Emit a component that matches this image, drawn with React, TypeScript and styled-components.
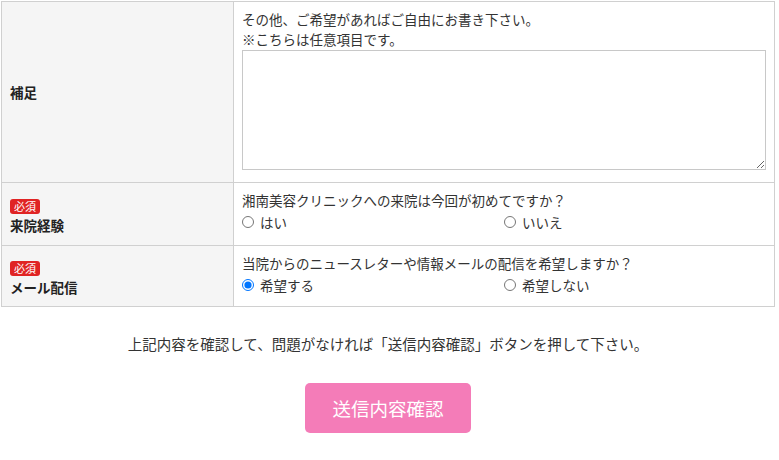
import React, { useState } from "react";
import styled, { createGlobalStyle } from "styled-components";

const GlobalStyle = createGlobalStyle`
  body {
    margin: 0;
    background: #fff;
    color: #333;
    font-family: "Noto Sans CJK JP", "Noto Sans", sans-serif;
  }
`;

const Page = styled.div`
  width: 779px;
  padding: 1px 4px 0 1px;
  box-sizing: border-box;
`;

const FormTable = styled.table`
  width: 774px;
  border-collapse: collapse;
  table-layout: fixed;
`;

const HeadCell = styled.th`
  width: 232px;
  box-sizing: border-box;
  background: #f5f5f5;
  border: 1px solid #d0d0d0;
  padding: 0 8px;
  text-align: left;
  vertical-align: middle;
  font-size: 13.5px;
  font-weight: bold;
  color: #222;
`;

const BodyCell = styled.td<{ $pad?: string }>`
  border: 1px solid #d0d0d0;
  padding: ${(p) => p.$pad || "7px 8px 11px"};
  vertical-align: top;
  font-size: 13.5px;
  color: #333;
`;

const Badge = styled.span`
  display: inline-block;
  background: #e02424;
  color: #fff;
  font-size: 11px;
  font-weight: normal;
  line-height: 15px;
  padding: 0 4px;
  border-radius: 3px;
  margin: 0 0 2px;
`;

const HeadLabel = styled.div`
  line-height: 18px;
`;

const Note = styled.p`
  margin: 0;
  line-height: 20px;
`;

const Memo = styled.textarea`
  display: block;
  box-sizing: border-box;
  width: 100%;
  height: 120px;
  margin: 1px 0 5px;
  border: 1px solid #c8c8c8;
  border-radius: 0;
  resize: vertical;
  font-family: inherit;
  font-size: 13px;
`;

const RadioRow = styled.div`
  display: grid;
  grid-template-columns: 1fr 1fr;
  height: 24px;
  align-items: center;
`;

const RadioLabel = styled.label`
  display: flex;
  align-items: center;
  gap: 6px;
  cursor: pointer;
`;

const Radio = styled.input`
  width: 12px;
  height: 12px;
  margin: 0;
`;

const Guide = styled.p`
  margin: 27px 0 0;
  text-align: center;
  font-size: 14.5px;
  line-height: 20px;
  color: #333;
`;

const Actions = styled.div`
  display: flex;
  justify-content: center;
  padding: 29px 0 26px;
`;

const SubmitButton = styled.button`
  width: 166px;
  height: 50px;
  border: none;
  border-radius: 5px;
  background: #f47cb8;
  color: #fff;
  font-family: inherit;
  font-size: 18.5px;
  cursor: pointer;
`;

type Choice = { value: string; label: string };

const RadioGroup = ({
  name,
  choices,
  value,
  onChange,
}: {
  name: string;
  choices: Choice[];
  value: string;
  onChange: (v: string) => void;
}) => (
  <RadioRow>
    {choices.map((c) => (
      <RadioLabel key={c.value}>
        <Radio
          type="radio"
          name={name}
          checked={value === c.value}
          onChange={() => onChange(c.value)}
        />
        {c.label}
      </RadioLabel>
    ))}
  </RadioRow>
);

const App = () => {
  const [visit, setVisit] = useState("");
  const [mail, setMail] = useState("yes");

  return (
    <Page>
      <GlobalStyle />
      <FormTable>
        <tbody>
          <tr>
            <HeadCell>補足</HeadCell>
            <BodyCell $pad="7px 8px 7px">
              <Note>その他、ご希望があればご自由にお書き下さい。</Note>
              <Note>※こちらは任意項目です。</Note>
              <Memo />
            </BodyCell>
          </tr>
          <tr>
            <HeadCell>
              <Badge>必須</Badge>
              <HeadLabel>来院経験</HeadLabel>
            </HeadCell>
            <BodyCell>
              <Note>湘南美容クリニックへの来院は今回が初めてですか？</Note>
              <RadioGroup
                name="visit"
                value={visit}
                onChange={setVisit}
                choices={[
                  { value: "yes", label: "はい" },
                  { value: "no", label: "いいえ" },
                ]}
              />
            </BodyCell>
          </tr>
          <tr>
            <HeadCell>
              <Badge>必須</Badge>
              <HeadLabel>メール配信</HeadLabel>
            </HeadCell>
            <BodyCell $pad="7px 8px 9px">
              <Note>当院からのニュースレターや情報メールの配信を希望しますか？</Note>
              <RadioGroup
                name="mail"
                value={mail}
                onChange={setMail}
                choices={[
                  { value: "yes", label: "希望する" },
                  { value: "no", label: "希望しない" },
                ]}
              />
            </BodyCell>
          </tr>
        </tbody>
      </FormTable>
      <Guide>
        上記内容を確認して、問題がなければ「送信内容確認」ボタンを押して下さい。
      </Guide>
      <Actions>
        <SubmitButton type="button">送信内容確認</SubmitButton>
      </Actions>
    </Page>
  );
};

export default App;
